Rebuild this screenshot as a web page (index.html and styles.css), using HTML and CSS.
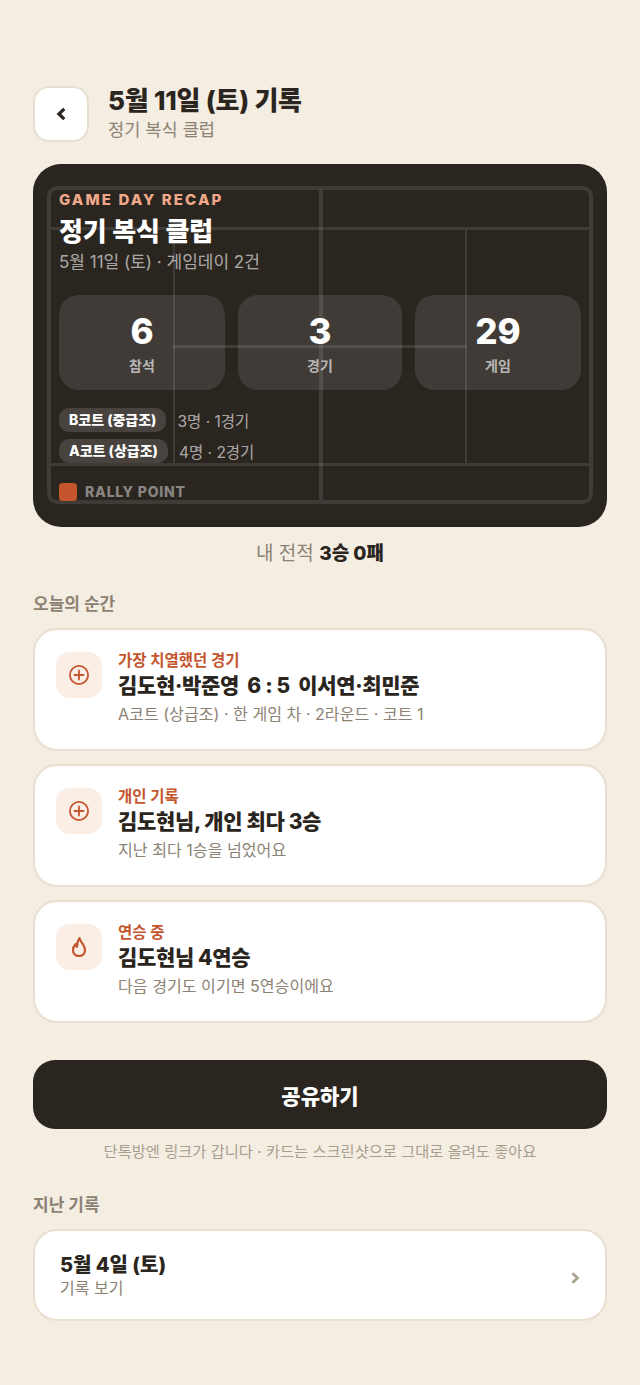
FILE: index.html
```html
<!DOCTYPE html>
<html lang="ko">
<head>
<meta charset="utf-8">
<title>5월 11일 (토) 기록</title>
<link rel="stylesheet" href="styles.css">
</head>
<body>
<main class="page">
  <header class="top">
    <button class="back" aria-label="뒤로">
      <svg width="12" height="18" viewBox="0 0 12 18"><path d="M9.300 3.800 3.900 9l5.400 5.200" fill="none" stroke="#2b2520" stroke-width="3.200"/></svg>
    </button>
    <div class="top-text">
      <h1>5월 11일 (토) 기록</h1>
      <p>정기 복식 클럽</p>
    </div>
  </header>

  <section class="recap">
    <div class="court" aria-hidden="true">
      <i class="ln h1"></i><i class="ln h2"></i><i class="ln h3"></i>
      <i class="ln v1"></i><i class="ln v2"></i><i class="ln v3"></i>
    </div>
    <div class="recap-in">
      <div class="eyebrow">GAME DAY RECAP</div>
      <h2>정기 복식 클럽</h2>
      <p class="recap-sub">5월 11일 (토) · 게임데이 2건</p>
      <div class="stats">
        <div class="stat"><b>6</b><span>참석</span></div>
        <div class="stat"><b>3</b><span>경기</span></div>
        <div class="stat"><b>29</b><span>게임</span></div>
      </div>
      <div class="groups">
        <div class="group"><span class="chip">B코트 (중급조)</span><span class="gtext">3명 · 1경기</span></div>
        <div class="group"><span class="chip">A코트 (상급조)</span><span class="gtext">4명 · 2경기</span></div>
      </div>
      <div class="brand"><i class="mark"></i><span>RALLY POINT</span></div>
    </div>
  </section>

  <p class="record">내 전적 <b>3승 0패</b></p>

  <h3 class="sec sec-a">오늘의 순간</h3>
  <div class="moments">
    <article class="moment">
      <div class="ico"><svg width="24" height="24" viewBox="0 0 24 24" fill="none" stroke="#c4552d" stroke-width="1.800" stroke-linecap="round"><circle cx="12" cy="12" r="9.100"/><path d="M12 7.500v9M7.500 12h9"/></svg></div>
      <div class="m-text">
        <div class="m-label">가장 치열했던 경기</div>
        <div class="m-title">김도현·박준영&nbsp; 6 : 5&nbsp; 이서연·최민준</div>
        <div class="m-sub">A코트 (상급조) · 한 게임 차 · 2라운드 · 코트 1</div>
      </div>
    </article>
    <article class="moment">
      <div class="ico"><svg width="24" height="24" viewBox="0 0 24 24" fill="none" stroke="#c4552d" stroke-width="1.800" stroke-linecap="round"><circle cx="12" cy="12" r="9.100"/><path d="M12 7.500v9M7.500 12h9"/></svg></div>
      <div class="m-text">
        <div class="m-label">개인 기록</div>
        <div class="m-title">김도현님, 개인 최다 3승</div>
        <div class="m-sub">지난 최다 1승을 넘었어요</div>
      </div>
    </article>
    <article class="moment">
      <div class="ico"><svg width="24" height="24" viewBox="0 0 24 24" fill="none" stroke="#c4552d" stroke-width="2.200" stroke-linejoin="round"><path d="M12.500 3.200C12.800 6.800 18 9.500 18 15c0 3.600-2.600 6-6 6s-6-2.400-6-6c0-2.400.9-4.300 2.400-5.800.3 1.300.8 2.100 1.600 2.600C10 8.500 10.900 5.400 12.500 3.200Z"/></svg></div>
      <div class="m-text">
        <div class="m-label">연승 중</div>
        <div class="m-title">김도현님 4연승</div>
        <div class="m-sub">다음 경기도 이기면 5연승이에요</div>
      </div>
    </article>
  </div>

  <button class="share">공유하기</button>
  <p class="hint">단톡방엔 링크가 갑니다 · 카드는 스크린샷으로 그대로 올려도 좋아요</p>

  <h3 class="sec sec-b">지난 기록</h3>
  <a class="past">
    <div>
      <div class="p-title">5월 4일 (토)</div>
      <div class="p-sub">기록 보기</div>
    </div>
    <svg class="chev" width="12" height="18" viewBox="0 0 12 18"><path d="M3.500 4.300 8.500 9l-5 4.700" fill="none" stroke="#a89e90" stroke-width="2.600"/></svg>
  </a>
</main>
</body>
</html>
```

FILE: styles.css
```css
* { box-sizing: border-box; }
html, body { margin: 0; padding: 0; }
body {
  background: #f4ede2;
  color: #2b2520;
  font-family: Inter, "Noto Sans CJK KR", sans-serif;
}
h1, h2, h3, p { margin: 0; }
.page { padding: 85px 33px 64px; width: 640px; }

.top { display: flex; align-items: center; gap: 19px; height: 57px; }
.back {
  width: 56px; height: 56px; padding: 0;
  background: #fff; border: 2px solid #e8dfd0; border-radius: 16px;
  display: flex; align-items: center; justify-content: center;
}
.top-text { margin-top: 1px; }
h1 { font-size: 26px; line-height: 30px; font-weight: 800; letter-spacing: -0.2px; }
.top-text p { font-size: 17.600px; line-height: 26px; margin-top: 1px; color: #8c8274; }

.recap {
  position: relative; margin-top: 22px; height: 363px;
  background: #2b2520; border-radius: 28px; overflow: hidden;
}
.court {
  position: absolute; left: 14px; top: 22px; width: 546px; height: 318px;
  border: 4px solid rgba(255,255,255,.1); border-radius: 10px;
}
.ln { position: absolute; background: rgba(255,255,255,.1); }
.h1 { left: 0; right: 0; top: 37px; height: 3px; }
.h2 { left: 0; right: 0; top: 273px; height: 3px; }
.h3 { left: 122px; width: 293px; top: 155px; height: 3px; }
.v1 { top: 0; bottom: 0; left: 268px; width: 4px; }
.v2 { top: 40px; height: 233px; left: 122px; width: 2px; }
.v3 { top: 40px; height: 233px; left: 414px; width: 2px; }
.recap-in { position: relative; padding: 26px 26px 0; }
.eyebrow { font-size: 15px; line-height: 20px; font-weight: 800; letter-spacing: 2.100px; color: #efa98a; }
.recap h2 { font-size: 26px; line-height: 32px; margin-top: 6px; font-weight: 800; color: #fff; letter-spacing: -0.1px; }
.recap-sub { font-size: 17px; line-height: 26px; margin-top: 1px; color: rgba(255,255,255,.62); }
.stats { display: grid; grid-template-columns: 166px 164px 166px; gap: 13px; margin-top: 20px; }
.stat {
  height: 95px; border-radius: 20px;
  background: rgba(255,255,255,.1);
  display: flex; flex-direction: column; align-items: center;
}
.stat b { font-size: 35px; line-height: 40px; margin-top: 16px; font-weight: 800; color: #fff; }
.stat span { font-size: 14px; line-height: 20px; margin-top: 5px; font-weight: 700; color: rgba(255,255,255,.65); }
.groups { display: flex; flex-direction: column; gap: 7px; margin-top: 18px; }
.group { display: flex; align-items: center; gap: 11px; height: 24px; }
.chip {
  height: 24px; line-height: 24px; padding: 0 10px; border-radius: 10px;
  background: rgba(255,255,255,.14); color: #fff; font-size: 14px; font-weight: 800; letter-spacing: 0;
}
.gtext { font-size: 15.500px; color: rgba(255,255,255,.62); }
.brand { display: flex; align-items: center; gap: 8px; margin-top: 20px; }
.mark { width: 18px; height: 18px; border-radius: 4px; background: #c4552d; }
.brand span { font-size: 14px; line-height: 18px; font-weight: 800; letter-spacing: .8px; color: rgba(255,255,255,.45); }

.record { text-align: center; font-size: 19px; line-height: 26px; margin-top: 14px; color: #8c8274; }
.record b { color: #2b2520; font-weight: 800; }

.sec { font-size: 17px; line-height: 22px; font-weight: 700; color: #8c8274; }
.sec-a { margin-top: 26px; }
.sec-b { margin-top: 30px; }
.moments { display: flex; flex-direction: column; gap: 13px; margin-top: 13px; }
.moment {
  height: 123px; background: #fff; border: 2px solid #e8dfd0; border-radius: 24px;
  display: flex; gap: 16px; padding: 22px 21px 0;
}
.ico {
  width: 46px; height: 46px; flex: none; background: #fbeee5; border-radius: 14px;
  display: flex; align-items: center; justify-content: center;
}
.m-text { display: flex; flex-direction: column; }
.m-label { font-size: 15.500px; line-height: 18px; font-weight: 700; color: #c4552d; }
.m-title { font-size: 21px; line-height: 30px; margin-top: 1px; font-weight: 800; letter-spacing: -0.35px; }
.m-sub { font-size: 16.100px; line-height: 24px; margin-top: 1px; color: #8c8274; }

.share {
  display: block; width: 100%; height: 69px; margin-top: 37px; padding: 0;
  background: #2b2520; border: 0; border-radius: 22px; color: #fff;
  font: 800 21px Inter, "Noto Sans CJK KR", sans-serif;
}
.hint { text-align: center; font-size: 15.300px; line-height: 24px; margin-top: 11px; color: #a89e90; }

.past {
  display: flex; align-items: center; justify-content: space-between;
  height: 92px; margin-top: 13px; padding: 0 24px 0 25px;
  background: #fff; border: 2px solid #e8dfd0; border-radius: 24px;
}
.p-title { font-size: 20px; line-height: 26px; font-weight: 800; }
.p-sub { font-size: 16px; line-height: 22px; margin-top: -1px; color: #8c8274; }
.chev { margin-top: 5px; }
```
